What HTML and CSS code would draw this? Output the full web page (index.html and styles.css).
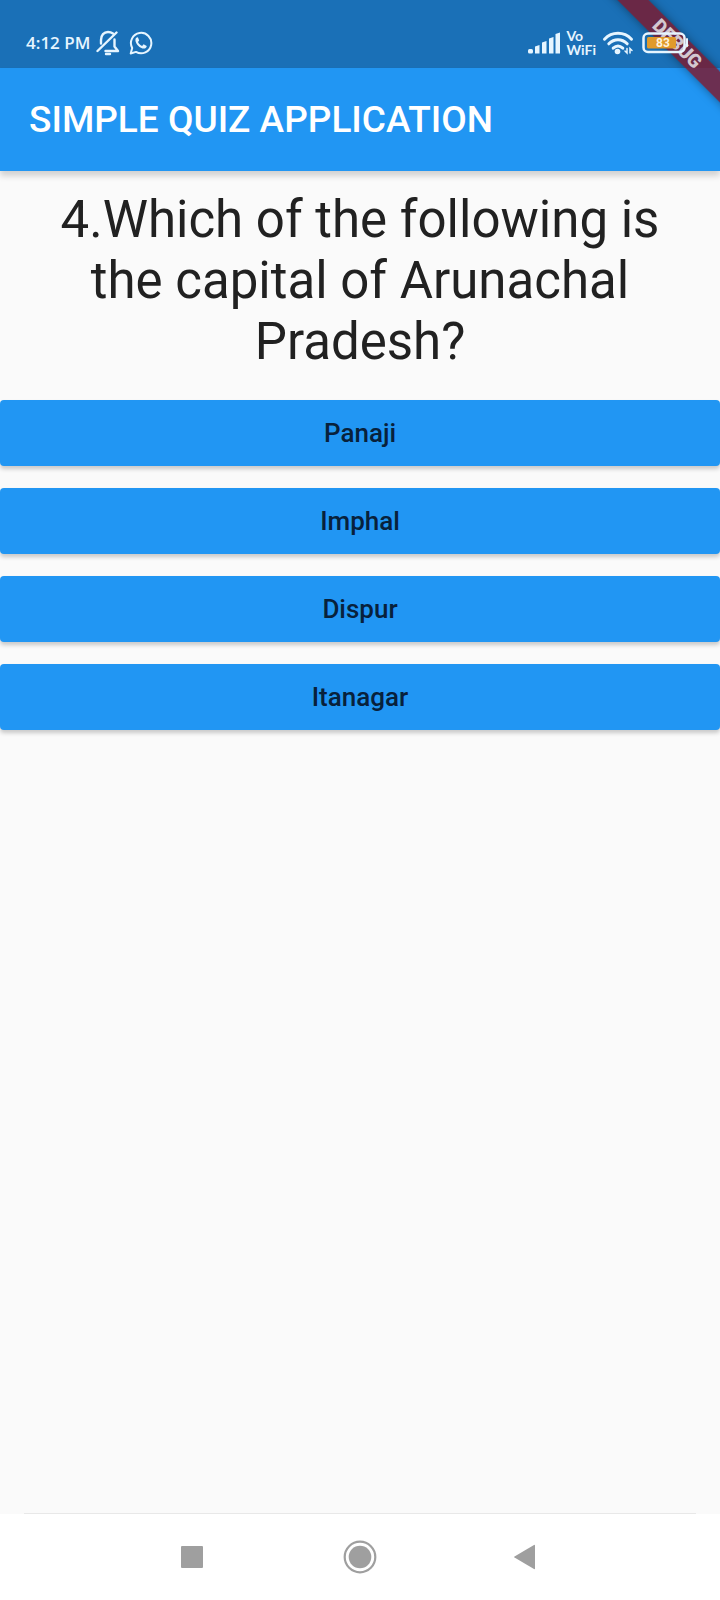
FILE: index.html
```html
<!DOCTYPE html>
<html lang="en">
<head>
<meta charset="utf-8">
<meta name="viewport" content="width=device-width, initial-scale=1">
<title>Simple Quiz Application</title>
<link rel="stylesheet" href="styles.css">
</head>
<body>
<div class="app">
  <div class="status-bar">
    <div class="status-group">
      <span class="clock">4:12 PM</span>
      <svg class="status-icon" width="24" height="26" viewBox="0 0 24 26" fill="none" stroke="currentColor" stroke-width="2.400" stroke-linecap="round" stroke-linejoin="round" aria-hidden="true">
        <path d="M5 13.500V10C5 5 8 2 12 2c2 0 3.500.5 5 1.500M18.500 9.500v7l3.500 4.500H9.500"/>
        <path d="M1.500 21 20.500 2.500"/>
        <path d="M10 24h4"/>
      </svg>
      <svg class="status-icon whatsapp" width="24" height="24" viewBox="0 0 24 24" aria-hidden="true">
        <path fill="none" stroke="currentColor" stroke-width="2" stroke-linejoin="round" d="M1.700 22.500 3.200 17A10.200 10.200 0 1 1 7 20.900Z"/>
        <path fill="currentColor" d="M8.300 6.300c-.5 0-1.900.9-1.900 2.700 0 4 4.600 8.600 8.500 8.600 1.600 0 2.900-1.300 2.800-2.700l-3.100-1.600-1.500 1.700c-1.900-.7-3.400-2.200-4.100-3.900l1.200-1.500-1.200-3.100Z"/>
      </svg>
    </div>
    <div class="status-group">
      <svg class="signal" width="33" height="22" viewBox="0 0 33 22" fill="currentColor" aria-hidden="true">
        <rect x="0" y="17" width="5" height="4.500" rx="1.500"/>
        <path d="M7 14.500 11.500 13v8.500H7ZM14 10.500 18.500 9v12.500H14ZM21 6.500 25.500 5v16.500H21ZM27.500 2 32 .5v21h-4.500Z"/>
      </svg>
      <span class="vowifi"><span>Vo</span><span>WiFi</span></span>
      <svg class="wifi" width="32" height="24" viewBox="0 0 32 24" fill="none" stroke="currentColor" stroke-width="3" stroke-linecap="round" aria-hidden="true">
        <path d="M2.500 8.200C10 .3 22 .3 29.500 8.200"/>
        <path d="M6.800 12.800c5.400-5.300 13-5.300 18.400 0"/>
        <path d="M11.200 17.200c3-2.700 6.600-2.700 9.600 0"/>
        <circle cx="15.500" cy="20.500" r="2.800" fill="currentColor" stroke="none"/>
        <path stroke-width="1.500" d="M25 17.500V22l-2-2M28 22v-4.500l2 2"/>
      </svg>
      <svg class="battery" width="48" height="22" viewBox="0 0 48 22" aria-hidden="true">
        <rect x="1.500" y="1.500" width="41" height="18.500" rx="4.500" fill="none" stroke="currentColor" stroke-width="2.500"/>
        <rect x="5" y="5" width="29" height="11.500" rx="1.500" fill="#e09a2b"/>
        <path d="M45 7v7" stroke="currentColor" stroke-width="2" stroke-linecap="round"/>
        <text class="battery-level" x="21" y="15" text-anchor="middle">83</text>
      </svg>
    </div>
  </div>
  <header class="app-bar"><h1 class="app-title">SIMPLE QUIZ APPLICATION</h1></header>
  <main class="quiz">
    <h2 class="question">4.Which of the following is the capital of Arunachal Pradesh?</h2>
    <div class="answers">
      <button class="answer" type="button">Panaji</button>
      <button class="answer" type="button">Imphal</button>
      <button class="answer" type="button">Dispur</button>
      <button class="answer" type="button">Itanagar</button>
    </div>
  </main>
  <nav class="nav-bar" aria-label="System navigation">
    <button class="nav-button" type="button" aria-label="Recent apps">
      <svg width="48" height="48" viewBox="0 0 48 48" fill="currentColor"><rect x="12" y="13" width="22" height="22" rx="1"/></svg>
    </button>
    <button class="nav-button" type="button" aria-label="Home">
      <svg width="48" height="48" viewBox="0 0 48 48" fill="currentColor"><circle cx="24" cy="24" r="15.300" fill="none" stroke="currentColor" stroke-width="2.200"/><circle cx="24" cy="24" r="11.300"/></svg>
    </button>
    <button class="nav-button" type="button" aria-label="Back">
      <svg width="48" height="48" viewBox="0 0 48 48" fill="currentColor"><path d="M11.500 23.400 31 12q1-.5 1 .5v23q0 1-1 .5L11.500 24.600q-1-.6 0-1.200Z"/></svg>
    </button>
  </nav>
  <div class="debug-corner"><span class="debug-ribbon">DEBUG</span></div>
</div>
</body>
</html>
```
FILE: styles.css
```css
* {
  box-sizing: border-box;
}

body {
  margin: 0;
  font-family: Roboto, "Liberation Sans", sans-serif;
  background: #fafafa;
}

.app {
  position: relative;
  display: flex;
  flex-direction: column;
  min-height: 100vh;
  overflow: hidden;
}

.status-bar {
  display: flex;
  justify-content: space-between;
  padding: 30px 30px 12px 26px;
  background: #1a70b7;
  color: #e6f5ff;
}

.status-group {
  position: relative;
  z-index: 2;
  display: flex;
  align-items: center;
  height: 26px;
}

.clock {
  margin-right: 6px;
  font-family: "Open Sans", sans-serif;
  font-size: 17px;
  font-weight: 600;
  line-height: 24px;
}

.whatsapp {
  margin-left: 9px;
}

.vowifi {
  display: flex;
  flex-direction: column;
  margin: 0 6px 0 5px;
  font-family: Lato, sans-serif;
  font-size: 14px;
  font-weight: 700;
  line-height: 14px;
}

.battery {
  margin-left: 8px;
}

.battery-level {
  font-size: 12px;
  font-weight: 700;
  fill: #fff3dc;
}

.app-bar {
  padding: 31px 29px 30px;
  background: #2196f3;
  box-shadow: 0 5px 6px rgba(0, 0, 0, 0.16);
}

.app-title {
  margin: 0;
  color: #fff;
  font-size: 37px;
  font-weight: 500;
  line-height: 42px;
}

.quiz {
  flex: 1;
}

.question {
  margin: 0;
  padding: 18px 40px 28px;
  color: #212121;
  font-size: 51px;
  font-weight: 400;
  line-height: 61px;
  text-align: center;
}

.answers {
  display: grid;
  gap: 22px;
}

.answer {
  width: 100%;
  padding: 18px;
  border: 0;
  border-radius: 4px;
  background: #2196f3;
  box-shadow: 0 3px 4px rgba(0, 0, 0, 0.2);
  color: #08213b;
  font-family: inherit;
  font-size: 26px;
  font-weight: 500;
  line-height: 30px;
}

.nav-bar {
  position: relative;
  display: flex;
  justify-content: center;
  gap: 119px;
  padding: 19px 24px;
  background: #fff;
}

.nav-bar::before {
  content: "";
  position: absolute;
  top: -1px;
  left: 24px;
  right: 24px;
  height: 1px;
  background: #e8e8e8;
}

.nav-button {
  padding: 0;
  border: 0;
  background: none;
  color: #9f9f9f;
}

.nav-button svg {
  display: block;
}

.debug-corner {
  position: absolute;
  top: 0;
  right: 0;
  z-index: 1;
  width: 120px;
  height: 120px;
  overflow: hidden;
}

.debug-ribbon {
  position: absolute;
  top: 33px;
  left: -13px;
  width: 180px;
  background: rgba(125, 25, 45, 0.82);
  box-shadow: 0 0 10px rgba(0, 0, 0, 0.4);
  color: #d3c7d0;
  font-size: 19px;
  font-weight: 900;
  line-height: 22px;
  text-align: center;
  transform: rotate(45deg);
}
```
